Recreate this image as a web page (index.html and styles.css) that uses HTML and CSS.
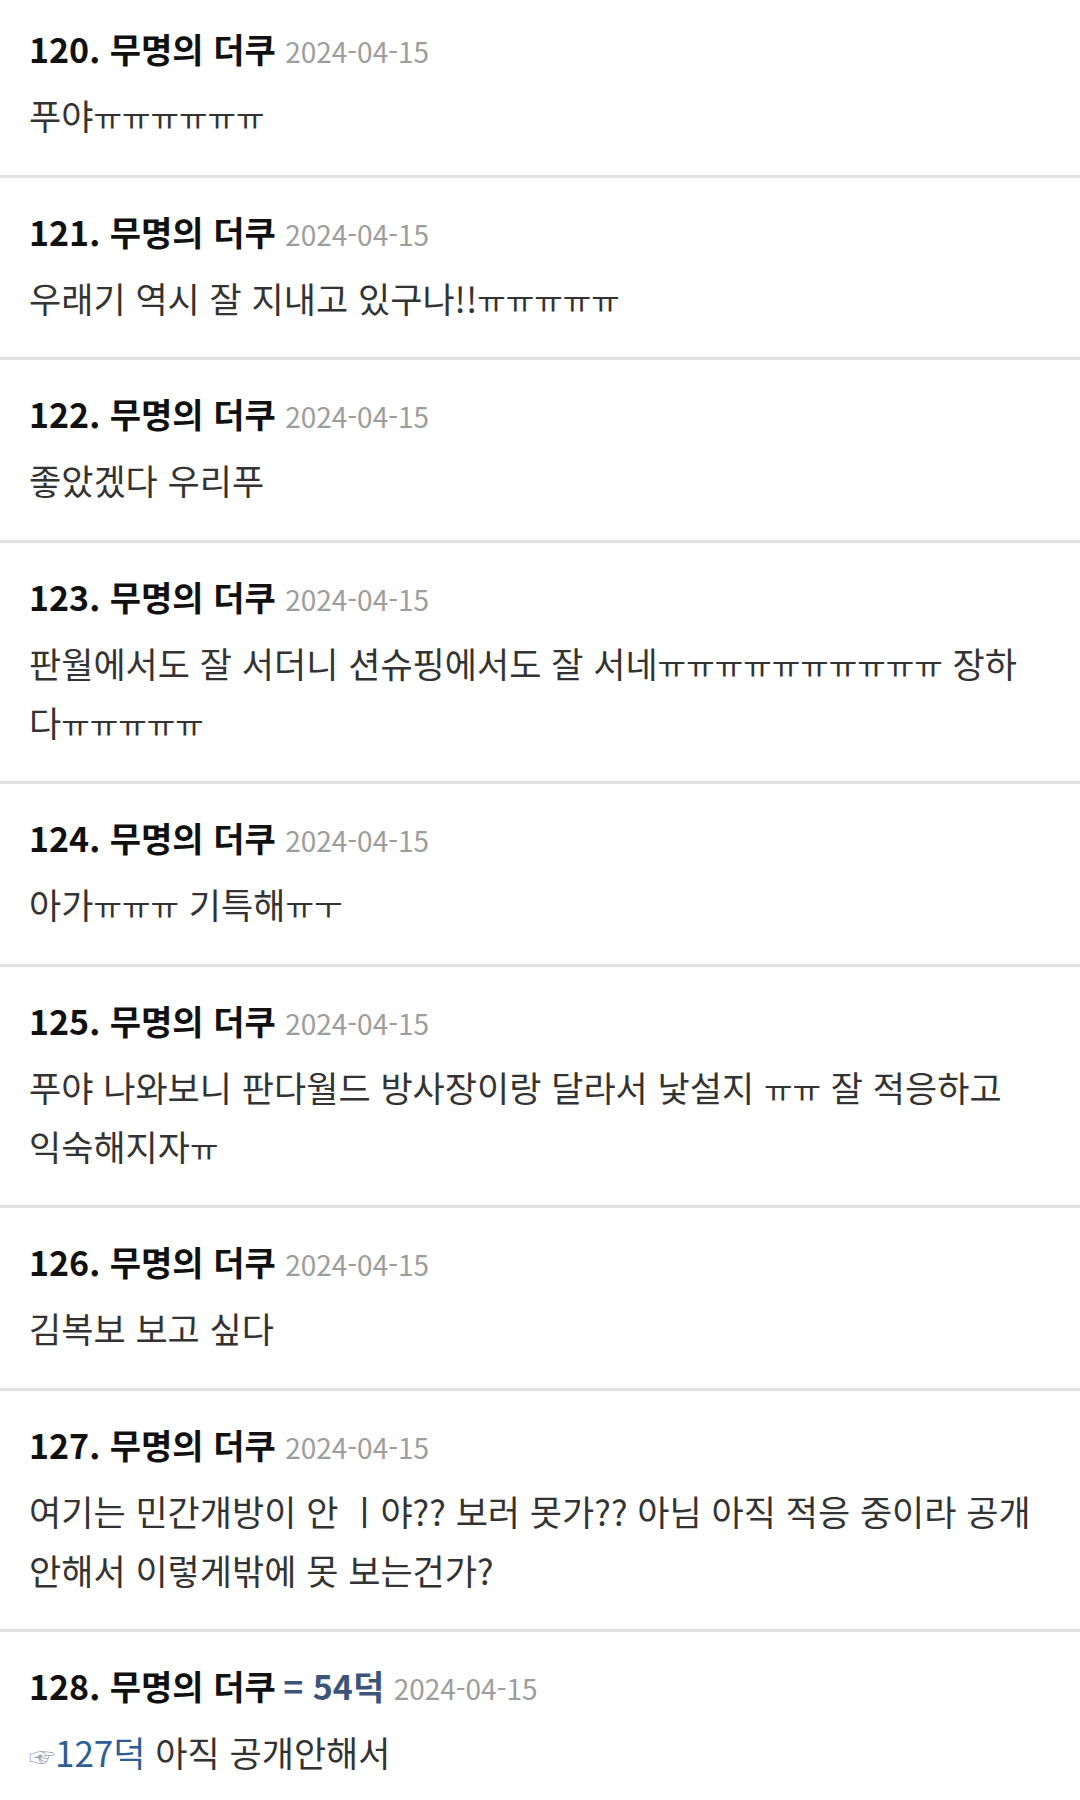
FILE: index.html
```html
<!DOCTYPE html>
<html lang="ko">

<head>
    <meta charset="UTF-8">
    <meta name="viewport" content="width=device-width, initial-scale=1.0">
    <title>댓글</title>
    <link rel="stylesheet" href="styles.css">
</head>

<body>
    <ul class="comments">
        <li class="comment">
            <div class="meta"><span class="name">120. 무명의 더쿠</span> <span class="date">2024-04-15</span></div>
            <p class="text">푸야<span class="cry">ㅠㅠㅠㅠㅠㅠ</span></p>
        </li>
        <li class="comment">
            <div class="meta"><span class="name">121. 무명의 더쿠</span> <span class="date">2024-04-15</span></div>
            <p class="text">우래기 역시 잘 지내고 있구나!!<span class="cry">ㅠㅠㅠㅠㅠ</span></p>
        </li>
        <li class="comment">
            <div class="meta"><span class="name">122. 무명의 더쿠</span> <span class="date">2024-04-15</span></div>
            <p class="text">좋았겠다 우리푸</p>
        </li>
        <li class="comment">
            <div class="meta"><span class="name">123. 무명의 더쿠</span> <span class="date">2024-04-15</span></div>
            <p class="text">판월에서도 잘 서더니 션슈핑에서도 잘 서네<span class="cry">ㅠㅠㅠㅠㅠㅠㅠㅠㅠㅠ</span> 장하다<span class="cry">ㅠㅠㅠㅠㅠ</span></p>
        </li>
        <li class="comment">
            <div class="meta"><span class="name">124. 무명의 더쿠</span> <span class="date">2024-04-15</span></div>
            <p class="text">아가<span class="cry">ㅠㅠㅠ</span> 기특해<span class="cry">ㅠㅜ</span></p>
        </li>
        <li class="comment">
            <div class="meta"><span class="name">125. 무명의 더쿠</span> <span class="date">2024-04-15</span></div>
            <p class="text">푸야 나와보니 판다월드 방사장이랑 달라서 낯설지 <span class="cry">ㅠㅠ</span> 잘 적응하고 익숙해지자<span class="cry">ㅠ</span></p>
        </li>
        <li class="comment">
            <div class="meta"><span class="name">126. 무명의 더쿠</span> <span class="date">2024-04-15</span></div>
            <p class="text">김복보 보고 싶다</p>
        </li>
        <li class="comment">
            <div class="meta"><span class="name">127. 무명의 더쿠</span> <span class="date">2024-04-15</span></div>
            <p class="text">여기는 민간개방이 안 ㅣ야?? 보러 못가?? 아님 아직 적응 중이라 공개 안해서 이렇게밖에 못 보는건가?</p>
        </li>
        <li class="comment">
            <div class="meta"><span class="name">128. 무명의 더쿠</span> <span class="ref">= 54덕</span> <span class="date">2024-04-15</span></div>
            <p class="text"><span class="hand">☞</span><a href="#" class="link">127덕</a> 아직 공개안해서</p>
        </li>
    </ul>
</body>

</html>
```

FILE: styles.css
```css
body {
    margin: 0;
    background: #fff;
    font-family: "Noto Sans CJK KR", "Noto Sans", sans-serif;
}

.comments {
    list-style: none;
    margin: 0;
    padding: 0;
}

.comment {
    padding: 30px 45px 30.5px 29px;
    border-bottom: 3px solid #e2e2e2;
}

.comment:first-child {
    padding-top: 25px;
}

.comment .meta {
    height: 48px;
    line-height: 48px;
    white-space: nowrap;
}

.comment .name {
    font-size: 34px;
    font-weight: 700;
    color: #111;
}

.comment .ref {
    font-size: 34px;
    font-weight: 700;
    color: #3b5579;
    margin-left: 3px;
}

.comment .date {
    font-size: 28px;
    color: #9d9d9d;
    margin-left: 5px;
}

.comment .text {
    margin: 12px 0 0;
    font-size: 35px;
    line-height: 59px;
    color: #333;
}

/* ㅠㅠ runs are narrower in the original font */
.comment .cry {
    font-size: 31px;
    line-height: 1;
}

.comment .hand {
    color: #9aa3ad;
    font-size: 26px;
    line-height: 1;
}

.comment .link {
    color: #2d5e95;
    text-decoration: none;
}
```
